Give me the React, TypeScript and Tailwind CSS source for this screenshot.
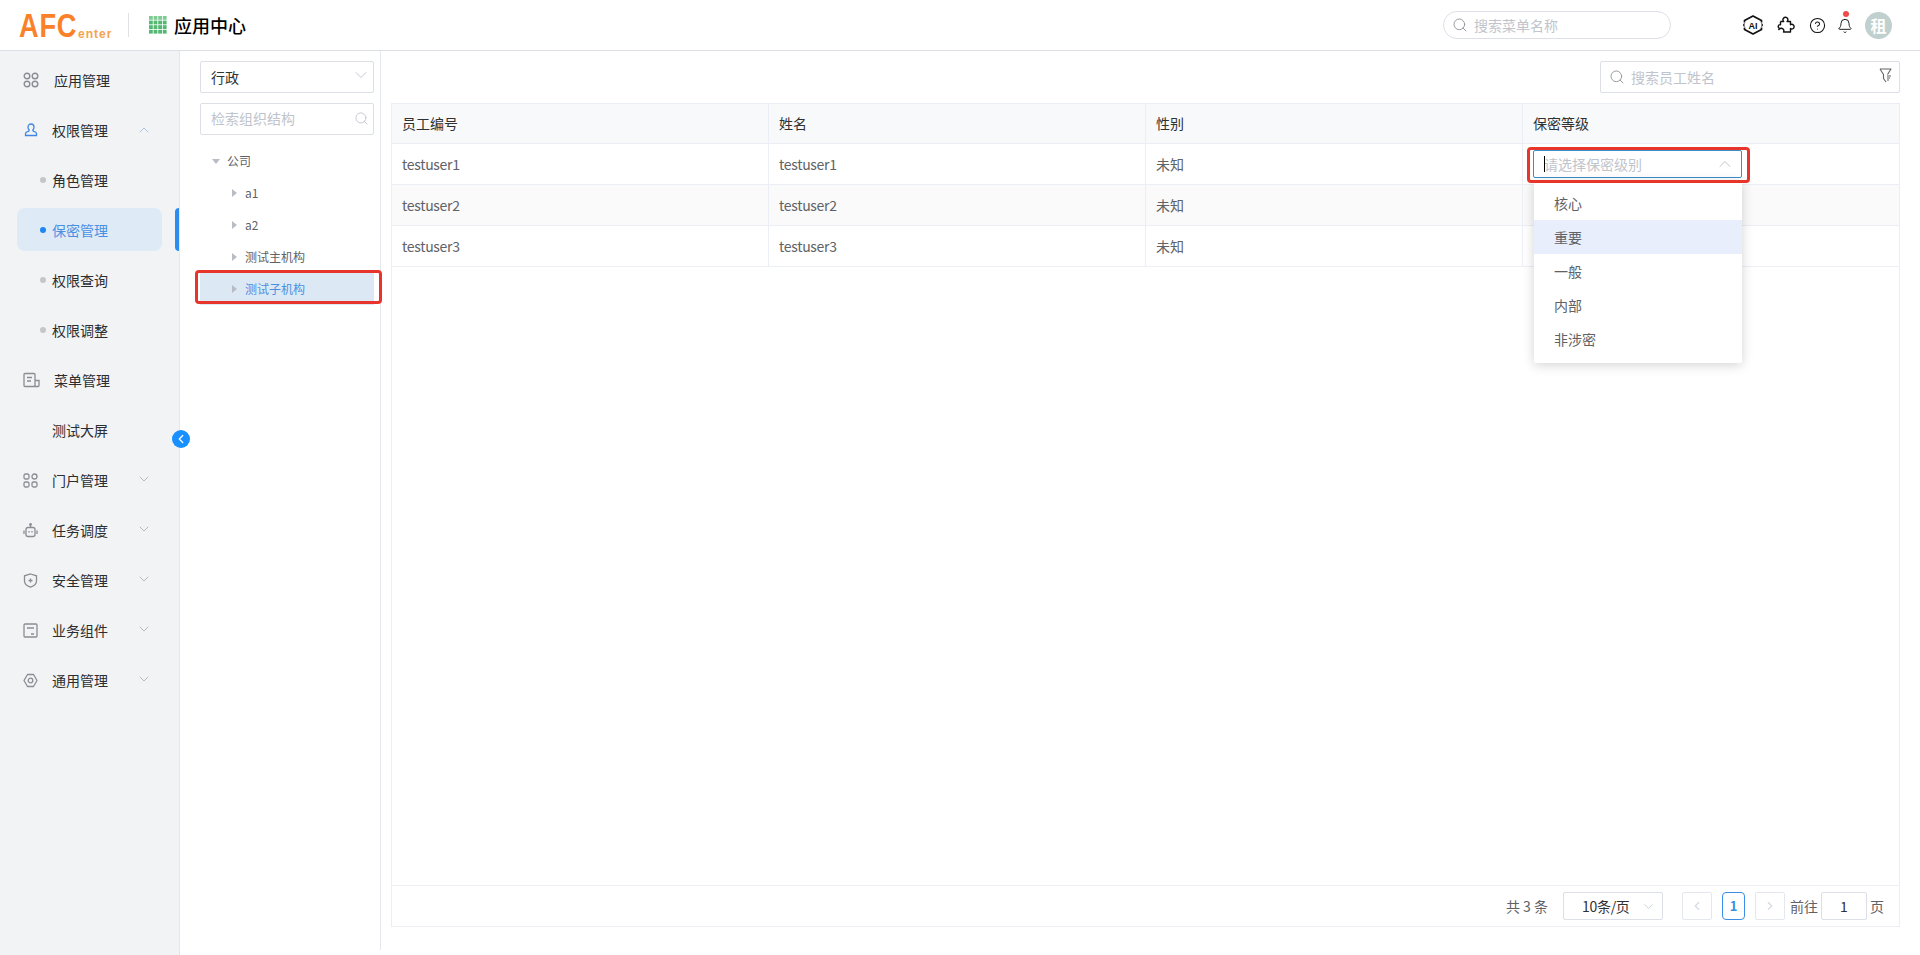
import { Bell, ChevronDown, ChevronLeft, ChevronRight, ChevronUp, CircleHelp, Search } from "lucide-react";
import type { ReactNode } from "react";

const font = '"Noto Sans CJK SC", "Noto Sans", sans-serif';

// Sidebar icons
const IconApps = () => (
  <svg width="16" height="16" viewBox="0 0 16 16" fill="none" stroke="#8a8d93" strokeWidth="1.4">
    <circle cx="4" cy="4" r="2.8" />
    <circle cx="12" cy="4" r="2.8" />
    <circle cx="4" cy="12" r="2.8" />
    <circle cx="12" cy="12" r="2.8" />
  </svg>
);
const IconUser = () => (
  <svg width="16" height="16" viewBox="0 0 16 16" fill="none" stroke="#3f86e6" strokeWidth="1.3">
    <path d="M5 5a3 3 0 0 1 6 0c0 1.5-.6 2.4-1.2 3 0 .8.4 1.3 1.5 1.6 1.5.4 2.2.9 2.2 2.2v1.7H2.500v-1.700c0-1.300.7-1.800 2.200-2.200 1.100-.3 1.500-.8 1.500-1.600C5.600 7.400 5 6.500 5 5z" />
  </svg>
);
const IconMenu = () => (
  <svg width="17" height="16" viewBox="0 0 17 16" fill="none" stroke="#8a8d93" strokeWidth="1.3">
    <path d="M12 14.500H2a1 1 0 0 1-1-1v-11a1 1 0 0 1 1-1h9a1 1 0 0 1 1 1v12h3a1 1 0 0 0 1-1V8.500h-4" />
    <path d="M4 5.500h5M4 9h4" />
  </svg>
);
const IconPortal = () => (
  <svg width="15" height="15" viewBox="0 0 15 15" fill="none" stroke="#8a8d93" strokeWidth="1.3">
    <rect x="1" y="1" width="5" height="5" rx="1.500" />
    <rect x="9" y="1" width="5" height="5" rx="2.500" />
    <rect x="1" y="9" width="5" height="5" rx="1.500" />
    <rect x="9" y="9" width="5" height="5" rx="1.500" />
  </svg>
);
const IconRobot = () => (
  <svg width="15" height="15" viewBox="0 0 15 15" fill="none" stroke="#8a8d93" strokeWidth="1.3">
    <rect x="3" y="4.500" width="9" height="9" rx="2" />
    <circle cx="7.500" cy="1.500" r="0.800" fill="#8a8d93" />
    <path d="M7.500 2.500v2M1 7.500v3.500M14 7.500v3.500" />
    <path d="M6 8v1.500M9 8v1.500" />
  </svg>
);
const IconShield = () => (
  <svg width="15" height="15" viewBox="0 0 15 15" fill="none" stroke="#8a8d93" strokeWidth="1.3">
    <path d="M7.500 1L13.500 2.800V8c0 3-2.500 5-6 6.200C4 13 1.500 11 1.500 8V2.800z" />
    <path d="M5.500 7.500h4M7.500 5.500v4" />
  </svg>
);
const IconBiz = () => (
  <svg width="15" height="15" viewBox="0 0 15 15" fill="none" stroke="#8a8d93" strokeWidth="1.3">
    <rect x="1" y="1" width="13" height="13" rx="1" />
    <path d="M4 5h7M8 11h3" />
  </svg>
);
const IconGear = () => (
  <svg width="15" height="15" viewBox="0 0 15 15" fill="none" stroke="#8a8d93" strokeWidth="1.3">
    <path d="M4.500 1.500h6L14 7.500l-3.500 6h-6L1 7.500z" strokeLinejoin="round" />
    <circle cx="7.500" cy="7.500" r="2.300" />
  </svg>
);

type NavItem = {
  label: string;
  icon?: ReactNode;
  dot?: boolean;
  arrow?: "up" | "down";
  active?: boolean;
  wide?: boolean;
};

const navItems: NavItem[] = [
  { label: "应用管理", icon: <IconApps />, wide: true },
  { label: "权限管理", icon: <IconUser />, arrow: "up" },
  { label: "角色管理", dot: true },
  { label: "保密管理", dot: true, active: true },
  { label: "权限查询", dot: true },
  { label: "权限调整", dot: true },
  { label: "菜单管理", icon: <IconMenu />, wide: true },
  { label: "测试大屏" },
  { label: "门户管理", icon: <IconPortal />, arrow: "down" },
  { label: "任务调度", icon: <IconRobot />, arrow: "down" },
  { label: "安全管理", icon: <IconShield />, arrow: "down" },
  { label: "业务组件", icon: <IconBiz />, arrow: "down" },
  { label: "通用管理", icon: <IconGear />, arrow: "down" },
];

const treeItems = [
  { label: "a1" },
  { label: "a2" },
  { label: "测试主机构" },
  { label: "测试子机构", selected: true },
];

const users = ["testuser1", "testuser2", "testuser3"];
const levels = ["核心", "重要", "一般", "内部", "非涉密"];

const Caret = ({ down }: { down?: boolean }) => (
  <span
    className={
      down
        ? "w-0 h-0 border-x-[4px] border-x-transparent border-t-[5px] border-t-[#b8bcc4]"
        : "w-0 h-0 border-y-[4px] border-y-transparent border-l-[5px] border-l-[#b8bcc4]"
    }
  />
);

const Header = () => (
  <header className="h-[51px] shrink-0 flex items-center bg-white border-b border-[#dcdfe6] pl-[19px] pr-[28px]">
    <div className="flex items-end w-[92px] h-[28px] text-[#fb8128] relative font-['Liberation_Sans']">
      <span className="text-[34px] leading-[28px] font-bold tracking-[1px] origin-left scale-x-[0.8] inline-block">AFC</span>
      <span className="absolute left-[59px] bottom-[-2px] text-[12px] leading-[14px] font-bold tracking-[1px] text-[#f3a44f]">enter</span>
    </div>
    <div className="ml-[17px] w-px h-[24px] bg-[#dfe1e5]" />
    <svg className="ml-[20px]" width="18" height="18" viewBox="0 0 18 18">
      {[0, 1, 2, 3].map((r) =>
        [0, 1, 2, 3].map((c) => (
          <rect key={`${r}-${c}`} x={c * 4.6} y={r * 4.6} width="3.800" height="3.800" fill={r === 0 ? "#7fcb94" : "#54b873"} />
        ))
      )}
    </svg>
    <span className="ml-[7px] text-[18px] font-medium text-black">应用中心</span>

    <div className="ml-auto flex items-center w-[228px] h-[28px] border border-[#dcdfe6] rounded-full pl-[8px]">
      <Search className="w-[16px] h-[16px] text-[#909399]" strokeWidth={1.4} />
      <span className="ml-[6px] text-[14px] text-[#c0c4cc]">搜索菜单名称</span>
    </div>

    <div className="ml-[72px] flex items-center">
      <svg width="20" height="20" viewBox="0 0 20 20" fill="none" stroke="#111" strokeWidth="1.700" strokeLinejoin="round">
        <path d="M1.500 7.500V5.600L10 1l8.500 4.600v1.900" />
        <path d="M1.500 12.500v1.900L10 19l8.500-4.600v-1.900" />
        <path d="M1.500 8.500L.500 10l1 1.500M18.500 8.500l1 1.500-1 1.500" strokeWidth="1.200" />
        <text x="10" y="13.500" textAnchor="middle" fontSize="9" fontWeight="700" fontFamily="Liberation Sans" fill="#111" stroke="none">AI</text>
      </svg>
      <svg className="ml-[13px]" width="20" height="20" viewBox="0 0 20 20" fill="none" stroke="#111" strokeWidth="1.400" strokeLinejoin="round">
        <path d="M4.500 6.500h3.200c-.9-1-1-2.300-.2-3.300 1-1.300 3.200-1.200 4 .2.600 1 .4 2.200-.4 3.100h3.400v3.200c1-.6 2.100-.5 2.900.3 1 1 .9 2.600-.1 3.500-.8.600-1.900.7-2.800.1v3.400H7.500c.5-.9.400-2.100-.4-2.900-1-1-2.800-1-3.800 0-.3.300-.6.600-.7 1" />
        <path d="M4.500 6.500v3.200C3.500 9.500 2.600 10 2.300 11c-.2 1 .3 2 1.300 2.300" />
      </svg>
      <CircleHelp className="ml-[13px] w-[17px] h-[17px] text-[#111]" strokeWidth={1.5} />
      <div className="ml-[11px] relative w-[16px] h-[20px] flex items-end">
        <Bell className="w-[17px] h-[18px] text-[#111]" strokeWidth={1.4} />
        <span className="absolute left-[6px] top-[-4px] w-[6px] h-[6px] rounded-full bg-[#f04b4b]" />
      </div>
      <div className="ml-[12px] w-[27px] h-[27px] rounded-full bg-[#c0d0ce] flex items-center justify-center text-[16px] font-bold text-white">租</div>
    </div>
  </header>
);

const Sidebar = () => (
  <aside className="w-[180px] shrink-0 bg-[#f2f3f5] border-r border-[#e4e7ed] pt-[4px] relative">
    {navItems.map((item) => (
      <div key={item.label} className="h-[50px] flex items-center relative">
        {item.active && <div className="absolute left-[17px] top-[3px] w-[145px] h-[43px] rounded-lg bg-[#deeaf6]" />}
        {item.active && <div className="absolute left-[175px] top-[3px] w-[4px] h-[43px] rounded-l bg-[#2d8cf0]" />}
        <div className="w-[52px] relative flex items-center shrink-0 pl-[23px]">
          {item.icon}
          {item.dot && (
            <span className={`absolute left-[40px] w-[6px] h-[6px] rounded-full ${item.active ? "bg-[#1e88f0]" : "bg-[#c4c6ca]"}`} />
          )}
        </div>
        <span className={`relative text-[14px] ${item.wide ? "ml-[2px]" : ""} ${item.active ? "text-[#4a90e2]" : "text-[#2b2d30]"}`}>
          {item.label}
        </span>
        {item.arrow === "up" && <ChevronUp className="absolute left-[136px] top-[17px] w-[16px] h-[16px] text-[#9db9d9]" strokeWidth={1.2} />}
        {item.arrow === "down" && <ChevronDown className="absolute left-[136px] top-[16px] w-[16px] h-[16px] text-[#a6a9ad]" strokeWidth={1.2} />}
      </div>
    ))}
    <button className="absolute left-[172px] top-[379px] w-[18px] h-[18px] rounded-full bg-[#1890ff] flex items-center justify-center text-white z-10">
      <ChevronLeft className="w-[14px] h-[14px]" strokeWidth={2.2} />
    </button>
  </aside>
);

const TreePanel = () => (
  <section className="w-[201px] shrink-0 border-r border-[#e4e7ed] pl-[20px] pr-[6px] pt-[10px] mb-[5px] relative">
    <div className="h-[32px] border border-[#dcdfe6] rounded-[2px] flex items-center justify-between pl-[10px] pr-[2px]">
      <span className="text-[14px] text-[#303133]">行政</span>
      <ChevronDown className="w-[20px] h-[20px] text-[#c0c4cc] -mt-[5px]" strokeWidth={1.1} />
    </div>
    <div className="mt-[10px] h-[32px] border border-[#dcdfe6] rounded-[2px] flex items-center justify-between pl-[10px] pr-[4px]">
      <span className="text-[14px] text-[#c0c4cc] -mt-[2px]">检索组织结构</span>
      <Search className="w-[15px] h-[15px] text-[#c0c4cc] -mt-[2px]" strokeWidth={1.4} />
    </div>
    <div className="mt-[10px]">
      <div className="h-[32px] flex items-center pl-[12px]">
        <Caret down />
        <span className="ml-[7px] text-[12px] text-[#606266]">公司</span>
      </div>
      {treeItems.map((node) => (
        <div key={node.label} className={`h-[32px] flex items-center pl-[32px] ${node.selected ? "bg-[#dde8f5]" : ""}`}>
          <Caret />
          <span className={`ml-[8px] text-[12px] ${node.selected ? "text-[#4a90e2]" : "text-[#606266]"}`}>{node.label}</span>
        </div>
      ))}
    </div>
    <div className="absolute left-[15px] top-[219px] w-[187px] h-[34px] border-[3px] border-[#e8352b] rounded-[4px]" />
  </section>
);

const Cell = ({ children, last }: { children?: ReactNode; last?: boolean }) => (
  <div className={`h-full flex items-center pl-[10px] text-[14px] relative ${last ? "" : "border-r border-[#ebeef5]"}`}>{children}</div>
);

const LevelCell = () => (
  <Cell last>
    <div className="w-[209px] h-[28px] border border-[#3a8fc8] rounded-[2px] flex items-center justify-between pl-[10px] pr-[6px] relative bg-white">
      <span className="absolute left-[10px] top-[5px] w-px h-[16px] bg-black" />
      <span className="text-[14px] text-[#c0c4cc]">请选择保密级别</span>
      <ChevronUp className="w-[20px] h-[20px] text-[#c0c4cc]" strokeWidth={1.2} />
    </div>
    <div className="absolute left-[11px] top-[37px] w-[208px] pt-[5px] pb-[7px] bg-white rounded-b-[2px] shadow-[0_2px_12px_rgba(0,0,0,0.18)] z-20">
      {levels.map((level) => (
        <div key={level} className={`h-[34px] flex items-center pl-[20px] text-[14px] text-[#606266] ${level === "重要" ? "bg-[#e8eefb]" : ""}`}>
          {level}
        </div>
      ))}
    </div>
    <div className="absolute left-[4px] top-[3px] w-[223px] h-[36px] border-[3px] border-[#e8352b] rounded-[4px] z-30" />
  </Cell>
);

const MainPanel = () => (
  <main className="flex-1 min-w-0 flex flex-col pl-[10px] pr-[20px] pt-[10px] pb-[28px]">
    <div className="flex justify-end">
      <div className="w-[300px] h-[32px] border border-[#dcdfe6] rounded-[2px] flex items-center pl-[8px] pr-[7px]">
        <Search className="w-[16px] h-[16px] text-[#909399]" strokeWidth={1.4} />
        <span className="ml-[6px] text-[14px] text-[#c0c4cc]">搜索员工姓名</span>
        <svg className="ml-auto -mt-[3px]" width="13" height="15" viewBox="0 0 13 15" fill="none" stroke="#606266" strokeWidth="1.100">
          <path d="M1 1h11L8.500 6.500" strokeLinejoin="round" />
          <path d="M1 1l3.500 5.500v4L7 14" strokeLinejoin="round" />
          <path d="M8 8h4M8 10h3M8 12h2" />
        </svg>
      </div>
    </div>

    <div className="mt-[10px] flex-1 flex flex-col border border-[#ebeef5]">
      <div className="grid grid-cols-[377px_377px_377px_1fr] h-[40px] bg-[#f8f9fa] border-b border-[#ebeef5] text-[#303133]">
        {["员工编号", "姓名", "性别"].map((title) => (
          <Cell key={title}>{title}</Cell>
        ))}
        <Cell last>保密等级</Cell>
      </div>
      {users.map((user, i) => (
        <div
          key={user}
          className={`grid grid-cols-[377px_377px_377px_1fr] h-[41px] border-b border-[#ebeef5] text-[#606266] ${i === 1 ? "bg-[#fafafa]" : ""}`}
        >
          <Cell><span className="tracking-[-0.3px]">{user}</span></Cell>
          <Cell><span className="tracking-[-0.3px]">{user}</span></Cell>
          <Cell>未知</Cell>
          {i === 0 ? <LevelCell /> : <Cell last />}
        </div>
      ))}

      <div className="mt-auto h-[41px] border-t border-[#ebeef5] flex items-center justify-end pr-[15px] text-[14px] text-[#606266]">
        <span>共 3 条</span>
        <div className="ml-[15px] w-[100px] h-[28px] border border-[#dcdfe6] rounded-[2px] flex items-center justify-between pl-[18px] pr-[6px] text-[#303133]">
          <span className="tracking-[-0.3px]">10条/页</span>
          <ChevronDown className="w-[15px] h-[15px] text-[#c0c4cc]" strokeWidth={1.2} />
        </div>
        <div className="ml-[19px] w-[30px] h-[28px] border border-[#e4e7ed] rounded-[2px] flex items-center justify-center">
          <ChevronLeft className="w-[14px] h-[14px] text-[#d5dae2]" strokeWidth={2} />
        </div>
        <div className="ml-[10px] w-[23px] h-[28px] border border-[#3a8ee6] rounded-[4px] flex items-center justify-center text-[13px] font-bold text-[#3a8ee6]">1</div>
        <div className="ml-[10px] w-[30px] h-[28px] border border-[#e4e7ed] rounded-[2px] flex items-center justify-center">
          <ChevronRight className="w-[14px] h-[14px] text-[#d5dae2]" strokeWidth={2} />
        </div>
        <span className="ml-[5px]">前往</span>
        <div className="ml-[3px] w-[46px] h-[28px] border border-[#dcdfe6] rounded-[2px] flex items-center justify-center text-[#303133]">1</div>
        <span className="ml-[3px]">页</span>
      </div>
    </div>
  </main>
);

export default function App() {
  return (
    <div className="h-[955px] w-[1920px] flex flex-col bg-white overflow-hidden" style={{ fontFamily: font }}>
      <Header />
      <div className="flex-1 min-h-0 flex">
        <Sidebar />
        <TreePanel />
        <MainPanel />
      </div>
    </div>
  );
}
